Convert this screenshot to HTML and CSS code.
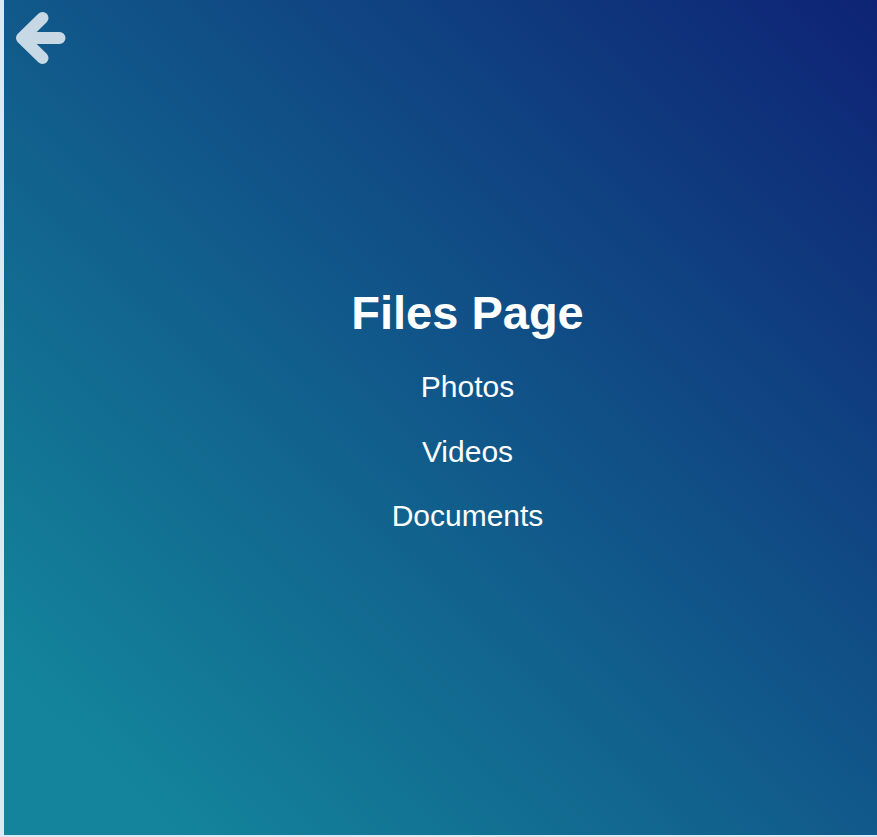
FILE: index.html
```html
<!DOCTYPE html>
<html lang="en">
<head>
<meta charset="utf-8">
<title>Files Page</title>
<link rel="stylesheet" href="styles.css">
</head>
<body>
<div class="page">
  <a class="back" href="#" aria-label="Back">
    <svg class="back-icon" viewBox="0 0 50 52" aria-hidden="true">
      <path d="M26.5 6 L6 26 L26.5 46 M6 26 L43.5 26"/>
    </svg>
  </a>
  <main class="content">
    <h1 class="title">Files Page</h1>
    <nav class="links">
      <a class="link" href="#">Photos</a>
      <a class="link" href="#">Videos</a>
      <a class="link" href="#">Documents</a>
    </nav>
  </main>
</div>
</body>
</html>
```
FILE: styles.css
```css
html, body {
  margin: 0;
  padding: 0;
}
body {
  background: #dce8f4;
  font-family: "Liberation Sans", Arial, sans-serif;
  height: 837px;
  overflow: hidden;
}
.page {
  position: relative;
  margin-left: 4px;
  height: 835px;
  background: linear-gradient(to top right, #13849b 10%, #0e2375 100%);
  display: flex;
  flex-direction: column;
  justify-content: center;
}
.back {
  position: absolute;
  left: 12px;
  top: 12px;
  display: block;
  line-height: 0;
}
.back-icon {
  display: block;
  width: 50px;
  height: 52px;
  fill: none;
  stroke: rgba(255, 255, 255, 0.77);
  stroke-width: 12;
  stroke-linecap: round;
  stroke-linejoin: round;
}
.content {
  display: flex;
  flex-direction: column;
  align-items: center;
  padding-left: 54px;
  padding-bottom: 17px;
  color: #ffffff;
}
.title {
  margin: 0 0 30px;
  font-size: 47px;
  font-weight: bold;
  line-height: normal;
}
.links {
  display: flex;
  flex-direction: column;
  align-items: center;
  gap: 30.4px;
}
.link {
  color: #ffffff;
  text-decoration: none;
  font-size: 30px;
  line-height: normal;
}
```
